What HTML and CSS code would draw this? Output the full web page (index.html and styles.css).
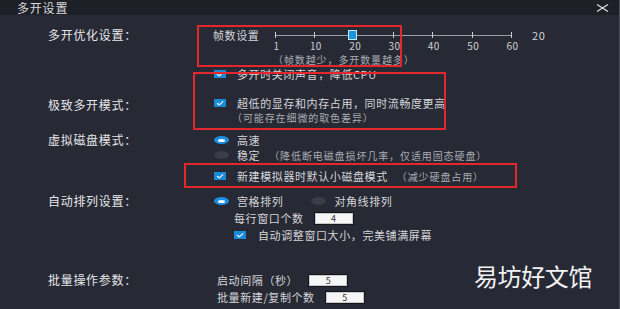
FILE: index.html
```html
<!DOCTYPE html>
<html lang="zh-CN">
<head>
    <meta charset="UTF-8">
    <title>多开设置</title>
    <link rel="stylesheet" href="styles.css">
</head>
<body>

<div class="window">
    <div class="titlebar">
        <span class="title">多开设置</span>
        <svg class="close" width="13" height="8" viewBox="0 0 13 8">
            <path d="M1 0.5 L12 7.5 M12 0.5 L1 7.5" stroke="#d8d8d8" stroke-width="1.3" fill="none"/>
        </svg>
    </div>

    <div class="content">
        <div class="section sec-opt">
            <div class="label">多开优化设置：</div>
            <div class="controls">
                <div class="line">
                    <span class="fps-name">帧数设置</span>
                    <div class="track">
                        <i></i><i></i><i></i><i></i><i></i><i></i><i></i>
                        <span class="thumb"></span>
                    </div>
                    <span class="fps-value">20</span>
                </div>
                <div class="tick-labels">
                    <span>1</span><span>10</span><span>20</span><span>30</span><span>40</span><span>50</span><span>60</span>
                </div>
                <div class="line hint fps-hint">（帧数越少，多开数量越多）</div>
                <div class="line gap-1">
                    <span class="checkbox"><svg width="12" height="8" viewBox="0 0 12 8"><path d="M3 4.2 L5.3 5.8 L9.2 2.4" stroke="#fff" stroke-width="1.1" fill="none"/></svg></span>
                    <span>多开时关闭声音，降低CPU</span>
                </div>
            </div>
        </div>

        <div class="section sec-extreme">
            <div class="label label-low">极致多开模式：</div>
            <div class="controls">
                <div class="line">
                    <span class="checkbox"><svg width="12" height="8" viewBox="0 0 12 8"><path d="M3 4.2 L5.3 5.8 L9.2 2.4" stroke="#fff" stroke-width="1.1" fill="none"/></svg></span>
                    <span>超低的显存和内存占用，同时流畅度更高</span>
                </div>
                <div class="line hint sub-hint">（可能存在细微的取色差异）</div>
            </div>
        </div>

        <div class="section sec-disk">
            <div class="label">虚拟磁盘模式：</div>
            <div class="controls">
                <div class="line">
                    <span class="radio on"></span>
                    <span>高速</span>
                </div>
                <div class="line gap-1">
                    <span class="radio"></span>
                    <span>稳定</span>
                    <span class="hint after">（降低断电磁盘损坏几率，仅适用固态硬盘）</span>
                </div>
                <div class="line gap-7">
                    <span class="checkbox"><svg width="12" height="8" viewBox="0 0 12 8"><path d="M3 4.2 L5.3 5.8 L9.2 2.4" stroke="#fff" stroke-width="1.1" fill="none"/></svg></span>
                    <span>新建模拟器时默认小磁盘模式</span>
                    <span class="hint after">（减少硬盘占用）</span>
                </div>
            </div>
        </div>

        <div class="section sec-arrange">
            <div class="label">自动排列设置：</div>
            <div class="controls">
                <div class="line">
                    <span class="radio on"></span>
                    <span>宫格排列</span>
                    <span class="radio second"></span>
                    <span>对角线排列</span>
                </div>
                <div class="line gap-3 indent">
                    <span>每行窗口个数</span>
                    <span class="field">4</span>
                </div>
                <div class="line gap-3 indent">
                    <span class="checkbox"><svg width="12" height="8" viewBox="0 0 12 8"><path d="M3 4.2 L5.3 5.8 L9.2 2.4" stroke="#fff" stroke-width="1.1" fill="none"/></svg></span>
                    <span>自动调整窗口大小，完美铺满屏幕</span>
                </div>
            </div>
        </div>

        <div class="section sec-batch">
            <div class="label">批量操作参数：</div>
            <div class="controls small-indent">
                <div class="line">
                    <span>启动间隔（秒）</span>
                    <span class="field">5</span>
                </div>
                <div class="line gap-3">
                    <span>批量新建/复制个数</span>
                    <span class="field">5</span>
                </div>
            </div>
        </div>
    </div>

    <div class="mark mark-1"></div>
    <div class="mark mark-2"></div>
    <div class="mark mark-3"></div>

    <div class="watermark">易坊好文馆</div>
</div>

</body>
</html>
```

FILE: styles.css
```css
body {
    margin: 0;
    background: #262a35;
    font-family: "Noto Sans CJK SC", "Noto Sans", sans-serif;
}
.window {
    position: relative;
    width: 620px;
    height: 309px;
    overflow: hidden;
    background: #272a35;
    color: #d4d5d8;
    border-right: 1px solid #4a4d57;
    box-sizing: border-box;
}
.titlebar {
    height: 15px;
    background: #1e2028;
    display: flex;
    align-items: center;
    justify-content: space-between;
    padding: 0 10px 0 17px;
}
.title {
    font-size: 12px;
    line-height: 15px;
    letter-spacing: 0.8px;
    color: #d8d8d8;
}
.content {
    padding: 13px 0 0 48px;
}
.section {
    display: flex;
}
.label {
    width: 166px;
    flex: none;
    font-size: 12px;
    line-height: 14px;
    letter-spacing: 0.7px;
    color: #e6e6e8;
}
.label-low {
    padding-top: 2px;
}
.controls {
    display: flex;
    flex-direction: column;
}
.line {
    display: flex;
    align-items: center;
    height: 14px;
    font-size: 11px;
    letter-spacing: 0.6px;
    white-space: nowrap;
}
.gap-1 { margin-top: 1px; }
.gap-3 { margin-top: 3px; }
.gap-7 { margin-top: 7px; }
.indent { margin-left: 20px; }
.small-indent { margin-left: 3px; }

.sec-extreme { margin-top: 15px; }
.sec-disk { margin-top: 9px; }
.sec-arrange { margin-top: 11px; }
.sec-batch { margin-top: 31px; }

.hint {
    font-size: 10px;
    letter-spacing: 0.9px;
    color: #a8aab0;
}
.fps-hint {
    margin-top: 1px;
    margin-left: 59px;
}
.sub-hint {
    margin-left: 18px;
}
.after {
    margin-left: 9px;
}

/* slider */
.fps-name {
    width: 62px;
    margin-left: -1px;
}
.track {
    position: relative;
    width: 237px;
    height: 14px;
    display: flex;
    justify-content: space-between;
    align-items: center;
    background: linear-gradient(#9c9ea5, #9c9ea5) center / 100% 1px no-repeat;
}
.track i {
    width: 1px;
    height: 6px;
    background: #cdcdd0;
}
.thumb {
    position: absolute;
    left: 73px;
    top: 2px;
    width: 7px;
    height: 8px;
    background: #1997e0;
    border: 1px solid #cfe6f6;
}
.fps-value {
    margin-left: 20px;
}
.tick-labels {
    display: flex;
    justify-content: space-between;
    width: 237px;
    height: 10px;
    margin: -1px 0 0 62px;
    font-size: 10px;
    line-height: 10px;
    letter-spacing: 0.4px;
    color: #cfd0d3;
}
.tick-labels span {
    width: 1px;
    display: flex;
    justify-content: center;
}

/* inputs */
.checkbox {
    width: 12px;
    height: 8px;
    flex: none;
    background: #1a8bd6;
    margin-right: 11px;
    display: flex;
}
.indent .checkbox {
    margin-right: 12px;
}
.radio {
    width: 15px;
    height: 8px;
    flex: none;
    border-radius: 50%;
    background: #3a3d49;
    margin-right: 8px;
    display: flex;
    align-items: center;
    justify-content: center;
}
.radio.on {
    background: #1a8fe2;
}
.radio.on::after {
    content: "";
    width: 7px;
    height: 3px;
    border-radius: 50%;
    background: #fff;
}
.radio.second {
    margin-left: 28px;
}
.field {
    width: 36px;
    height: 9px;
    margin-left: 11px;
    background: #f6f6f6;
    border: 1px solid #c8c8c8;
    box-shadow: 0 0 0 1px #15161b;
    font-size: 9px;
    line-height: 9px;
    color: #333;
    text-align: center;
    letter-spacing: 0;
}

/* annotations */
.mark {
    position: absolute;
    box-sizing: border-box;
    border: 2px solid #e3272c;
}
.mark-1 { left: 197px; top: 25px; width: 205px; height: 42px; }
.mark-2 { left: 193px; top: 72px; width: 253px; height: 58px; }
.mark-3 { left: 184px; top: 163px; width: 333px; height: 25px; }

.watermark {
    position: absolute;
    left: 474px;
    top: 264px;
    font-size: 24px;
    line-height: 24px;
    letter-spacing: -0.4px;
    color: #f2f2f2;
}
```
